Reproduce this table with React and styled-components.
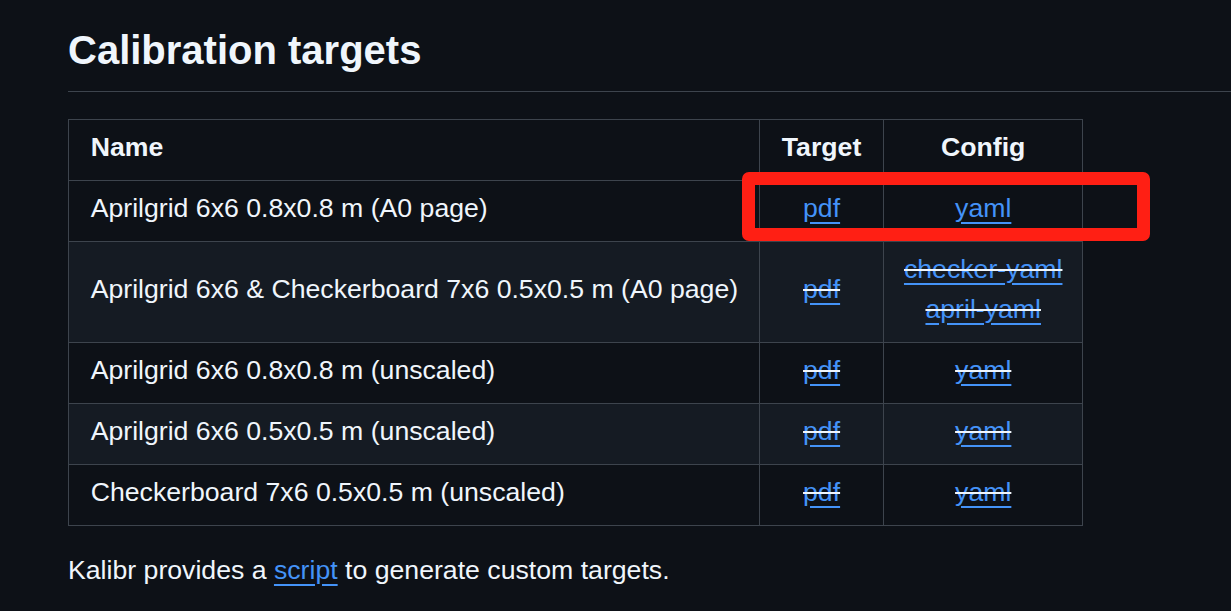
import React from "react";
import styled, { createGlobalStyle } from "styled-components";

const GlobalStyle = createGlobalStyle`
    html, body {
        margin: 0;
        padding: 0;
        background: #0d1117;
    }

    body {
        color: #f0f6fc;
        font-family: "Liberation Sans", Arial, sans-serif;
    }
`;

const Article = styled.article`
    position: relative;
    padding: 25px 0 0 68px;
    font-size: 26.67px;
    line-height: 1.5;
`;

const Heading = styled.h2`
    margin: 0 0 27px;
    padding-bottom: 16px;
    font-size: 40px;
    font-weight: 700;
    line-height: 1.25;
    border-bottom: 1px solid #3d444d;
`;

const Table = styled.table`
    border-collapse: collapse;
    border-spacing: 0;
    margin: 0 0 24px;

    th,
    td {
        padding: 7px 21.67px 13px;
        border: 1px solid #3d444d;
    }

    th:first-child,
    td:first-child {
        padding-right: 21px;
    }

    th:last-child,
    td:last-child {
        padding-left: 20px;
        padding-right: 20px;
    }

    th {
        font-weight: 700;
    }

    tbody tr:nth-child(2n) {
        background: #151b23;
    }
`;

const Cell = styled.td`
    text-align: ${(props) => (props.center ? "center" : "left")};
`;

const HeadCell = styled.th`
    text-align: ${(props) => (props.center ? "center" : "left")};
`;

const Link = styled.a`
    color: #4493f8;
    text-decoration: underline;
    text-underline-offset: 5px;
`;

const Struck = styled.del`
    color: #f0f6fc;
    text-decoration: line-through;
`;

const Paragraph = styled.p`
    margin: 0;
`;

const Highlight = styled.div`
    position: absolute;
    left: 742px;
    top: 172px;
    width: 408px;
    height: 69px;
    box-sizing: border-box;
    border: 13px solid #ff1f14;
    border-radius: 7px;
    pointer-events: none;
`;

function DocLink({ children, struck }) {
    const link = <Link href="#">{children}</Link>;
    return struck ? <Struck>{link}</Struck> : link;
}

const rows = [
    { name: "Aprilgrid 6x6 0.8x0.8 m (A0 page)", config: ["yaml"], struck: false },
    {
        name: "Aprilgrid 6x6 & Checkerboard 7x6 0.5x0.5 m (A0 page)",
        config: ["checker-yaml", "april-yaml"],
        struck: true,
    },
    { name: "Aprilgrid 6x6 0.8x0.8 m (unscaled)", config: ["yaml"], struck: true },
    { name: "Aprilgrid 6x6 0.5x0.5 m (unscaled)", config: ["yaml"], struck: true },
    { name: "Checkerboard 7x6 0.5x0.5 m (unscaled)", config: ["yaml"], struck: true },
];

export default function App() {
    return (
        <>
            <GlobalStyle />
            <Article>
                <Heading>Calibration targets</Heading>
                <Table>
                    <thead>
                        <tr>
                            <HeadCell>Name</HeadCell>
                            <HeadCell center>Target</HeadCell>
                            <HeadCell center>Config</HeadCell>
                        </tr>
                    </thead>
                    <tbody>
                        {rows.map((row) => (
                            <tr key={row.name}>
                                <Cell>{row.name}</Cell>
                                <Cell center>
                                    <DocLink struck={row.struck}>pdf</DocLink>
                                </Cell>
                                <Cell center>
                                    {row.config.map((c, i) => (
                                        <React.Fragment key={c}>
                                            {i > 0 && <br />}
                                            <DocLink struck={row.struck}>{c}</DocLink>
                                        </React.Fragment>
                                    ))}
                                </Cell>
                            </tr>
                        ))}
                    </tbody>
                </Table>
                <Paragraph>
                    Kalibr provides a <Link href="#">script</Link> to generate custom targets.
                </Paragraph>
                <Highlight />
            </Article>
        </>
    );
}
